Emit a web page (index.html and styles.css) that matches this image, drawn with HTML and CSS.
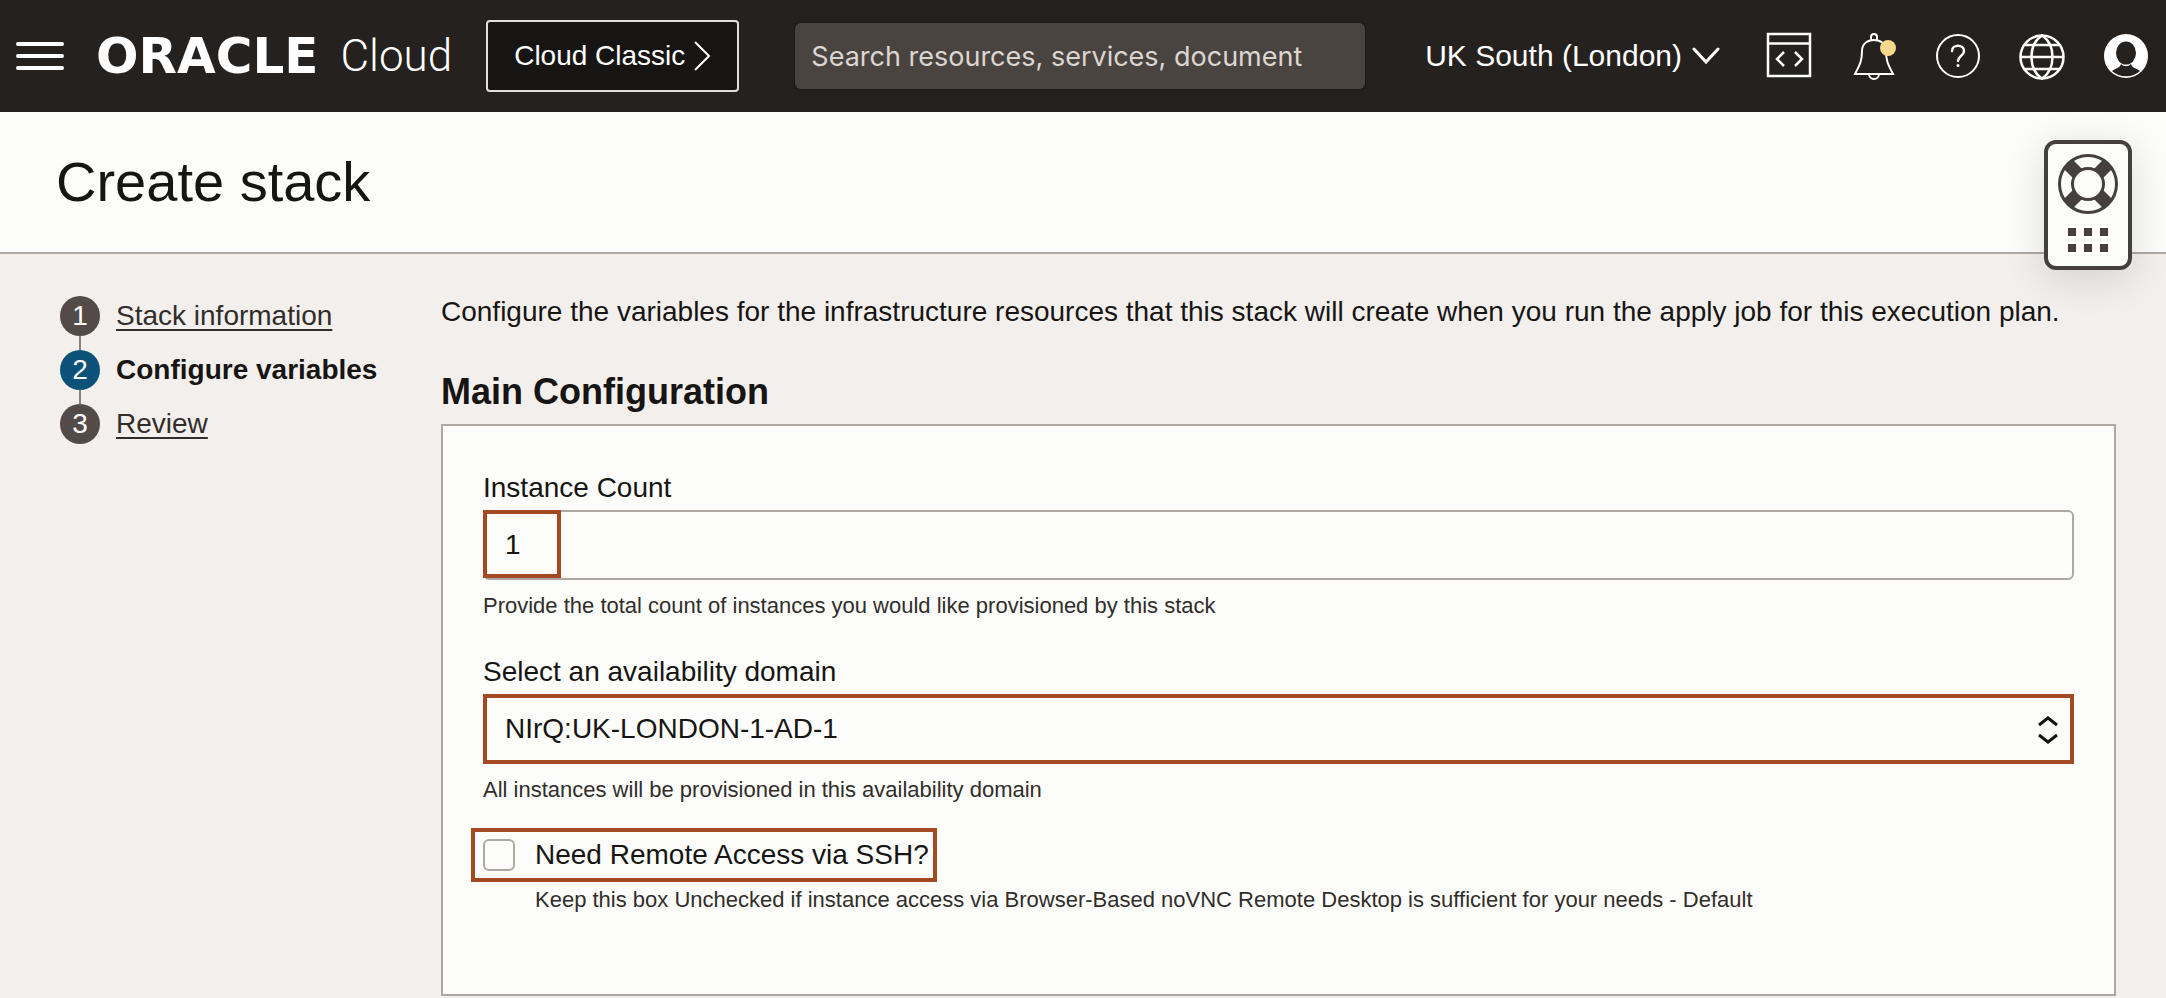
FILE: index.html
```html
<!DOCTYPE html>
<html lang="en">
<head>
<meta charset="utf-8">
<title>Create stack | Oracle Cloud</title>
<link rel="stylesheet" href="styles.css">
</head>
<body>
<header class="topbar">
  <button class="icon-btn menu" aria-label="Open navigation menu">
    <svg width="48" height="30" viewBox="0 0 48 30"><path d="M2 3h44M2 15h44M2 27h44" stroke="#fff" stroke-width="4" stroke-linecap="round"/></svg>
  </button>
  <a class="brand" href="#">
    <span class="wordmark">ORACLE</span>
    <span class="brand-name">Cloud</span>
  </a>
  <button class="classic">Cloud Classic
    <svg width="18" height="30" viewBox="0 0 18 30"><path d="M2 1l14 14L2 29" fill="none" stroke="#fff" stroke-width="2"/></svg>
  </button>
  <input class="search" type="text" aria-label="Search" placeholder="Search resources, services, document">
  <nav class="tools" aria-label="Console tools">
    <button class="region">UK South (London)
      <svg width="28" height="18" viewBox="0 0 28 18"><path d="M2 2l12 13L26 2" fill="none" stroke="#fff" stroke-width="3" stroke-linecap="round"/></svg>
    </button>
    <button class="icon-btn" aria-label="Developer tools">
      <svg width="48" height="48" viewBox="0 0 48 48" fill="none" stroke="#fff" stroke-width="2.5"><path d="M2 2h42v42H2zM2 11.500h42"/><path d="M18 20l-7 7 7 7M29 20l7 7-7 7"/></svg>
    </button>
    <button class="icon-btn" aria-label="Notifications">
      <svg width="48" height="48" viewBox="0 0 48 48" fill="none" stroke="#fff" stroke-width="2"><path d="M5 42c4-8 7-12 7-23C12 12 17 8 24 8s12 4 12 11c0 11 3 15 7 23zM19 42a5 5 0 0 0 10 0M21 8V5a3 3 0 0 1 6 0v3"/><circle cx="38" cy="16" r="8" fill="#f5d78e" stroke="none"/></svg>
    </button>
    <button class="icon-btn" aria-label="Help">
      <svg width="48" height="48" viewBox="0 0 48 48" fill="none" stroke="#fff" stroke-width="2"><circle cx="24" cy="24" r="21"/><path d="M18 19c0-7 12-7 12 0 0 5-6 5-6 10" stroke-width="2.5" stroke-linecap="round"/><circle cx="24" cy="33.500" r="1.500" fill="#fff" stroke="none"/></svg>
    </button>
    <button class="icon-btn" aria-label="Language">
      <svg width="48" height="48" viewBox="0 0 48 48" fill="none" stroke="#fff" stroke-width="2.500"><circle cx="24" cy="25" r="21.500"/><path d="M24 3.500c-14 9-14 34 0 43 14-9 14-34 0-43zM3 25h42M7 13h34M7 37h34"/></svg>
    </button>
    <button class="icon-btn" aria-label="Profile">
      <svg width="48" height="48" viewBox="0 0 48 48"><circle cx="24" cy="24" r="22" fill="#fff"/><ellipse cx="24" cy="21" rx="10" ry="11.500" fill="#25211e"/><path d="M10 39c4-3 8-3 9-7 3 3 7 3 10 0 1 4 5 4 9 7a21 21 0 0 1-28 0z" fill="#25211e"/></svg>
    </button>
  </nav>
</header>

<div class="titlebar">
  <h1>Create stack</h1>
  <button class="support" aria-label="Support">
    <svg width="60" height="60" viewBox="0 0 60 60" fill="none" stroke="#45403e"><path d="M10 10l13 13M50 10L37 23M10 50l13-13M50 50L37 37" stroke-width="13"/><circle cx="30" cy="30" r="15.500" fill="#fcfdfa" stroke-width="3"/><circle cx="30" cy="30" r="28.500" stroke-width="3"/></svg>
    <svg width="40" height="24" viewBox="0 0 40 24"><path d="M0 0h8v8H0zM16 0h8v8h-8zM32 0h8v8h-8zM0 16h8v8H0zM16 16h8v8h-8zM32 16h8v8h-8z" fill="#45403e"/></svg>
  </button>
</div>

<div class="layout">
  <nav aria-label="Steps">
    <ol class="steps">
      <li><span class="num">1</span><a href="#">Stack information</a></li>
      <li class="current" aria-current="step"><span class="num">2</span>Configure variables</li>
      <li><span class="num">3</span><a href="#">Review</a></li>
    </ol>
  </nav>
  <main>
    <p class="intro">Configure the variables for the infrastructure resources that this stack will create when you run the apply job for this execution plan.</p>
    <h2>Main Configuration</h2>
    <form class="panel">
      <div class="field">
        <label for="count">Instance Count</label>
        <div class="control count">
          <input id="count" type="text" value="1">
        </div>
        <p class="hint">Provide the total count of instances you would like provisioned by this stack</p>
      </div>
      <div class="field">
        <label for="domain">Select an availability domain</label>
        <div class="control domain">
          <select id="domain"><option>NIrQ:UK-LONDON-1-AD-1</option></select>
          <svg class="arrows" width="20" height="28" viewBox="0 0 20 28"><path d="M1 9l9-7 9 7M1 19l9 7 9-7" fill="none" stroke="#161513" stroke-width="3"/></svg>
        </div>
        <p class="hint">All instances will be provisioned in this availability domain</p>
      </div>
      <div class="check-field">
        <label class="check"><input type="checkbox">Need Remote Access via SSH?</label>
        <p class="hint">Keep this box Unchecked if instance access via Browser-Based noVNC Remote Desktop is sufficient for your needs - Default</p>
      </div>
    </form>
  </main>
</div>
</body>
</html>
```

FILE: styles.css
```css
*, *::before, *::after { box-sizing: border-box; }

body {
  margin: 0;
  background: #f3efec;
  color: #161513;
  font: 28px/36px "Liberation Sans", Arial, sans-serif;
}

h1, h2, p, ol { margin: 0; padding: 0; font-weight: normal; }
button, input, select { font: inherit; color: inherit; margin: 0; }
button { border: 0; background: none; padding: 0; }
svg { display: block; flex: none; }

.topbar {
  display: flex;
  align-items: center;
  height: 112px;
  padding: 0 16px;
  background: #25211e;
  color: #fff;
}
.icon-btn { display: block; flex: none; }
.brand {
  display: flex;
  align-items: center;
  gap: 22px;
  margin: 0 34px 0 32px;
  color: #fff;
  line-height: 48px;
  text-decoration: none;
}
.wordmark { font-family: "DejaVu Sans", sans-serif; font-size: 50px; font-weight: bold; }
.brand-name { font-family: Roboto, sans-serif; font-size: 44px; font-weight: 300; }
.classic {
  display: flex;
  align-items: center;
  gap: 8px;
  height: 72px;
  padding: 0 26px;
  border: 2px solid #e4ddda;
  border-radius: 4px;
  background: #161513;
  white-space: nowrap;
}
.search {
  flex: 1;
  min-width: 0;
  height: 66px;
  margin: 0 60px 0 56px;
  padding: 2px 16px;
  border: 0;
  border-radius: 6px;
  background: #4a4440;
  font-family: Inter, sans-serif;
  font-size: 27px;
  box-shadow: 0 0 0 1px #1d1a18;
}
.search::placeholder { color: #dcd6d1; opacity: 1; }
.tools { display: flex; align-items: center; gap: 36px; }
.region {
  display: flex;
  align-items: center;
  gap: 10px;
  margin-right: 10px;
  font-size: 30px;
  white-space: nowrap;
}

.titlebar {
  display: flex;
  justify-content: space-between;
  align-items: flex-start;
  height: 142px;
  padding: 28px 34px 0 56px;
  border-bottom: 2px solid #aea8a2;
  background: #fcfdfa;
}
h1 { font-size: 56px; line-height: 84px; }
.support {
  display: flex;
  flex-direction: column;
  align-items: center;
  gap: 14px;
  position: relative;
  flex: none;
  width: 88px;
  height: 130px;
  padding: 10px 0 0;
  border: 4px solid #45403e;
  border-radius: 12px;
  background: #fcfdfa;
  box-shadow: 0 8px 40px rgba(22, 21, 19, 0.14);
}

.layout {
  display: grid;
  grid-template-columns: 341px 1fr;
  gap: 40px;
  padding: 38px 50px 0 60px;
}
.steps { display: grid; gap: 14px; list-style: none; padding-top: 4px; }
.steps li {
  display: flex;
  align-items: center;
  gap: 16px;
  position: relative;
  height: 40px;
  white-space: nowrap;
}
.steps li + li::before {
  content: "";
  position: absolute;
  left: 19px;
  bottom: 100%;
  width: 2px;
  height: 14px;
  background: #8b8580;
}
.steps a { color: #312d2a; text-decoration-thickness: 2px; text-underline-offset: 4px; }
.num {
  width: 40px;
  border-radius: 50%;
  background: #534b47;
  color: #fff;
  line-height: 40px;
  text-align: center;
  font-weight: normal;
}
.current { font-weight: bold; }
.current .num { background: #0b5178; }

.intro { padding-top: 2px; }
h2 { margin: 38px 0 8px; font-size: 36px; line-height: 48px; font-weight: bold; }
.panel {
  padding: 42px 40px 78px;
  border: 2px solid #aea8a2;
  background: #fcfdfa;
}
.field + .field { margin-top: 30px; }
.field label { display: block; line-height: 40px; }
.control { position: relative; margin: 2px 0 10px; }
.control input,
.control select {
  display: block;
  width: 100%;
  height: 70px;
  padding: 0 20px;
  border: 2px solid #aea8a2;
  border-radius: 6px;
  background: #fcfdfa;
  appearance: none;
}
.count::after {
  content: "";
  position: absolute;
  inset: 0 auto 2px 0;
  width: 78px;
  border: 4px solid #a34a22;
  pointer-events: none;
}
.domain select { padding: 0 18px; border: 4px solid #a34a22; border-radius: 0; }
.arrows { position: absolute; top: 22px; right: 16px; pointer-events: none; }
.hint { font-size: 22px; line-height: 32px; color: #312d2a; }
.check-field {
  display: flex;
  flex-direction: column;
  align-items: flex-start;
  margin: 22px 0 0 -12px;
}
.check {
  display: flex;
  align-items: center;
  gap: 20px;
  height: 54px;
  padding: 0 4px 0 8px;
  border: 4px solid #a34a22;
}
.check input {
  appearance: none;
  width: 32px;
  height: 32px;
  border: 2px solid #aea8a2;
  border-radius: 6px;
  background: #fcfdfa;
}
.check-field .hint { margin: 2px 0 0 64px; }
```
